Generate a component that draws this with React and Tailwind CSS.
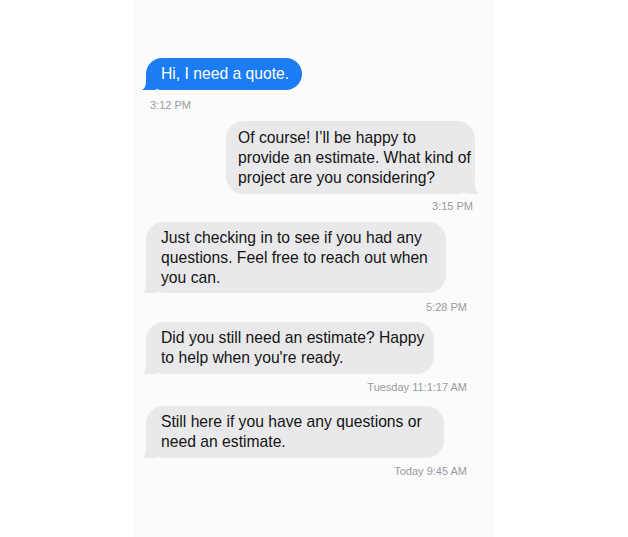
import React from "react"

// small iMessage-style tail, drawn for the bottom-left corner
function Tail({ color, right }) {
  return (
    <svg
      width="14"
      height="16"
      viewBox="0 0 14 16"
      className={right ? "absolute bottom-0 right-[-4px] -scale-x-100" : "absolute bottom-0 left-[-4px]"}
    >
      <path d="M4 0 H14 V16 H7 C5 16.6 2 16.6 0 16 C2.6 14.6 4 12 4 8 Z" fill={color} />
    </svg>
  )
}

function Stamp({ children, className }) {
  return (
    <div className={`text-[11px] leading-[13px] text-[#9a9a9e] ${className}`}>{children}</div>
  )
}

function Bubble({ lines, className, right, blue }) {
  const color = blue ? "#1b7cf3" : "#e9e9eb"
  return (
    <div
      className={`relative rounded-[18px] whitespace-nowrap text-[15.7px] leading-5 ${
        blue ? "bg-[#1b7cf3] text-white" : "bg-[#e9e9eb] text-[#141414]"
      } ${className}`}
    >
      {lines.map((l, i) => (
        <div key={i}>{l}</div>
      ))}
      <Tail color={color} right={right} />
    </div>
  )
}

export default function App() {
  return (
    <div
      className="h-[537px] bg-white flex justify-center"
      style={{ fontFamily: '"Liberation Sans", Arial, sans-serif' }}
    >
      <div className="w-[362px] h-full bg-[#fbfbfb] pt-[58px] pl-[13px] pr-[20px] flex flex-col">
        <Bubble
          blue
          lines={["Hi, I need a quote."]}
          className="self-start w-[156px] h-8 pl-[15px] pt-[6px]"
        />
        <Stamp className="mt-[9px] ml-1">3:12 PM</Stamp>

        <Bubble
          right
          lines={[
            "Of course! I\u2019ll be happy to",
            "provide an estimate. What kind of",
            "project are you considering?",
          ]}
          className="self-end mt-[9px] w-[249px] pl-3 pt-[7px] pb-[6px]"
        />
        <Stamp className="self-end mt-[6px] mr-[2px]">3:15 PM</Stamp>

        <Bubble
          lines={[
            "Just checking in to see if you had any",
            "questions. Feel free to reach out when",
            "you can.",
          ]}
          className="self-start mt-[9px] w-[300px] pl-[15px] pt-[6px] pb-[5px]"
        />
        <Stamp className="self-end mt-[8px] mr-2">5:28 PM</Stamp>

        <Bubble
          lines={["Did you still need an estimate? Happy", "to help when you're ready."]}
          className="self-start mt-[8px] w-[288px] pl-[15px] pt-[6px] pb-[6px]"
        />
        <Stamp className="self-end mt-[7px] mr-2">Tuesday 11:1:17 AM</Stamp>

        <Bubble
          lines={["Still here if you have any questions or", "need an estimate."]}
          className="self-start mt-[12px] w-[298px] pl-[15px] pt-[6px] pb-[6px]"
        />
        <Stamp className="self-end mt-[7px] mr-2">Today 9:45 AM</Stamp>
      </div>
    </div>
  )
}
